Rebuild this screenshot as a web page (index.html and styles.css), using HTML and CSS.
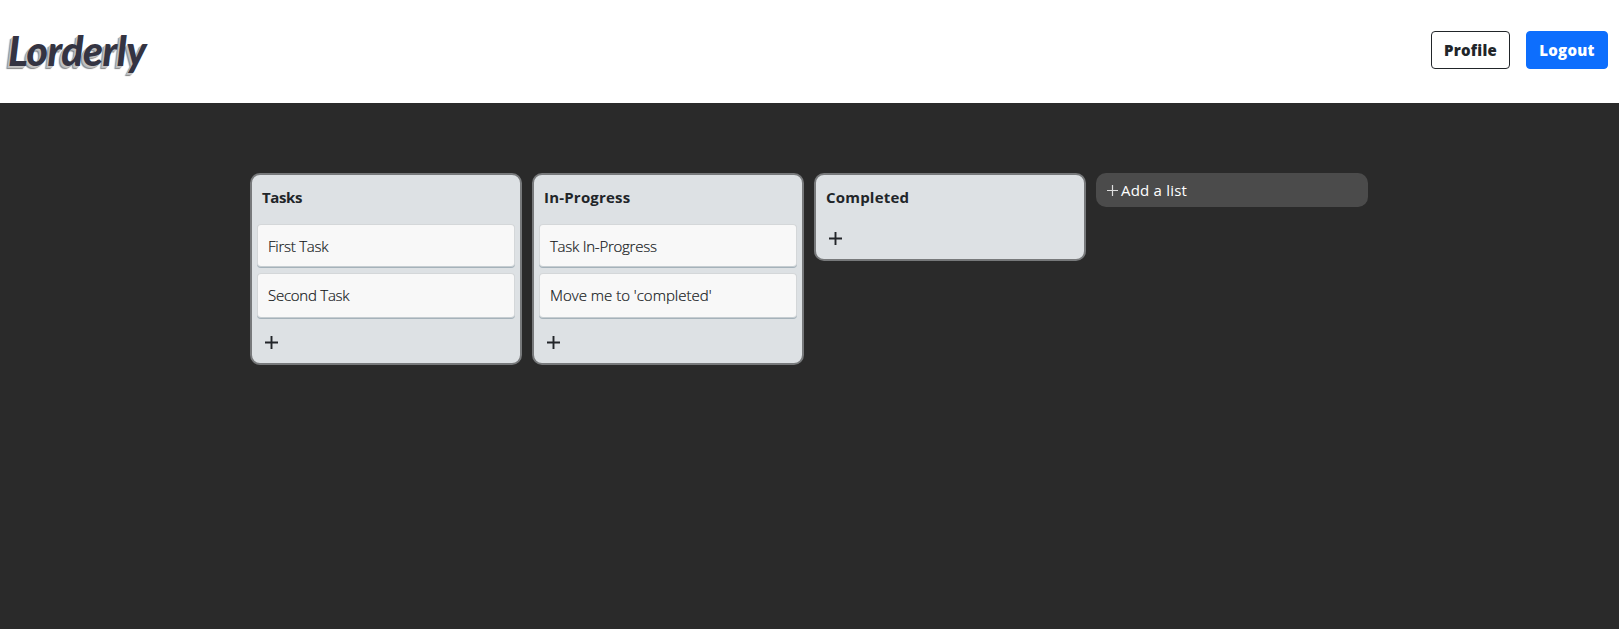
FILE: index.html
```html
<!DOCTYPE html>
<html lang="en">
<head>
<meta charset="utf-8">
<title>Lorderly</title>
<link rel="stylesheet" href="styles.css">
</head>
<body>
<header class="header">
  <a class="logo">Lorderly</a>
  <nav class="actions">
    <button class="btn btn-outline">Profile</button>
    <button class="btn btn-primary">Logout</button>
  </nav>
</header>
<main class="board">
  <section class="list">
    <h2 class="list-title title-tight">Tasks</h2>
    <div class="card card-tight">First Task</div>
    <div class="card card-tight card-last">Second Task</div>
    <button class="add-card" aria-label="Add card"><svg width="13" height="13" viewBox="0 0 13 13"><path d="M6.5 0v13M0 6.5h13"/></svg></button>
  </section>
  <section class="list">
    <h2 class="list-title">In-Progress</h2>
    <div class="card card-tight">Task In-Progress</div>
    <div class="card card-last">Move me to 'completed'</div>
    <button class="add-card" aria-label="Add card"><svg width="13" height="13" viewBox="0 0 13 13"><path d="M6.5 0v13M0 6.5h13"/></svg></button>
  </section>
  <section class="list">
    <h2 class="list-title">Completed</h2>
    <button class="add-card" aria-label="Add card"><svg width="13" height="13" viewBox="0 0 13 13"><path d="M6.5 0v13M0 6.5h13"/></svg></button>
  </section>
  <button class="add-list"><svg width="11" height="11" viewBox="0 0 11 11"><path d="M5.5 0v11M0 5.5h11"/></svg><span>Add a list</span></button>
</main>
</body>
</html>
```
FILE: styles.css
```css
* { box-sizing: border-box; }
body {
  margin: 0;
  min-height: 100vh;
  background: #2a2a2a;
  color: #212529;
  font-family: "Open Sans", "Noto Sans", sans-serif;
  font-size: 15px;
}
button { font: inherit; margin: 0; cursor: pointer; }
.header {
  height: 103px;
  padding: 0 11px 0 8px;
  display: flex;
  align-items: flex-start;
  justify-content: space-between;
  background: #fff;
}
.logo {
  margin-top: 26px;
  font: italic 900 41px/50px Lato, cursive;
  letter-spacing: -0.5px;
  color: #343442;
  text-shadow: -1px 1px 0 #c4c4c4, -2px 2px 0 #bbb, -3px 3px 1px #858585;
}
.actions { display: flex; gap: 16px; margin-top: 31px; }
.btn {
  height: 38px;
  padding: 0;
  border: 1px solid #212529;
  border-radius: 4px;
  font-weight: 800;
  line-height: 36px;
  letter-spacing: 0.25px;
}
.btn-outline { width: 79px; background: #fff; color: #212529; }
.btn-primary { width: 82px; background: #0d6efd; border-color: #0d6efd; color: #fff; }
.board {
  display: flex;
  align-items: flex-start;
  gap: 10px;
  padding: 70px 0 0 250px;
}
.list {
  width: 272px;
  padding: 0 5px;
  border: 2px solid #77797b;
  border-radius: 10px;
  background: #dde1e4;
}
.list-title {
  margin: 0;
  height: 49px;
  padding: 10px 5px 0;
  font-size: 15px;
  font-weight: 700;
  line-height: 24px;
  letter-spacing: 0.2px;
}
.title-tight { letter-spacing: -0.4px; }
.card {
  height: 43px;
  margin: 0 0 6px;
  padding: 0 10px;
  border: 1px solid #d4d7d9;
  border-bottom-color: #c6cdd1;
  border-radius: 4px;
  box-shadow: 0 1px 0 #a5b2ba;
  background: #f8f8f8;
  color: #15181b;
  font-weight: 300;
  line-height: 42px;
  -webkit-text-stroke: 0.2px #15181b;
}
.card-tight { letter-spacing: -0.25px; }
.card-last { height: 45px; margin-bottom: 10px; }
.add-card {
  display: block;
  width: 100%;
  height: 35px;
  padding: 8px 8px 14px;
  border: 0;
  background: none;
  text-align: left;
  line-height: 0;
}
.add-card svg { fill: none; stroke: #222529; stroke-width: 1.9; }
.add-list {
  display: flex;
  align-items: center;
  gap: 3px;
  width: 272px;
  height: 34px;
  padding: 0 11px;
  border: 0;
  border-radius: 10px;
  background: #4b4b4b;
  color: #fff;
}
.add-list svg { fill: none; stroke: #ddd; stroke-width: 1.2; }
.add-list span { letter-spacing: 0.2px; }
```
